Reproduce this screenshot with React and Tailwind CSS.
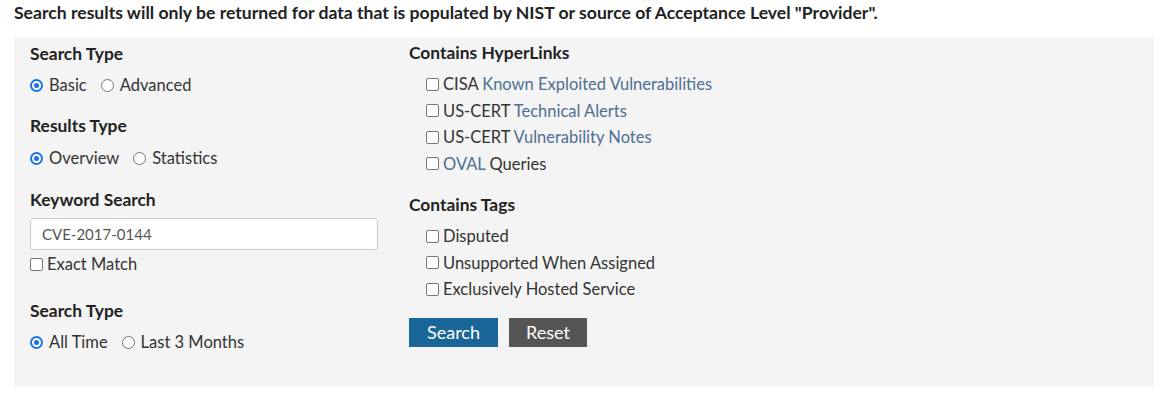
import React from "react";

function Radio({ checked, label }) {
  return (
    <label className="flex items-center mr-[14px]">
      <span
        className={
          "w-[13px] h-[13px] rounded-full border box-border mr-[6px] flex items-center justify-center bg-white " +
          (checked ? "border-[#1a73e8] border-[2px]" : "border-[#767676]")
        }
      >
        {checked ? <span className="block w-[5px] h-[5px] rounded-full bg-[#1a73e8]" /> : null}
      </span>
      <span>{label}</span>
    </label>
  );
}

function Box() {
  return <span className="inline-block w-[13px] h-[13px] border border-[#767676] rounded-[2px] bg-white mr-[4px] box-border shrink-0" />;
}

function Check({ children }) {
  return (
    <label className="flex items-center h-[26.5px]">
      <Box />
      <span>{children}</span>
    </label>
  );
}

function A({ children }) {
  return <span className="text-[#4e6f91]">{children}</span>;
}

export default function App() {
  return (
    <div className="bg-white text-[#333] text-[16.5px] leading-[20px] font-['Lato','Noto_Sans',sans-serif] w-[1165px] h-[400px]">
      <div className="pl-[14px] pt-[3px] h-[38px] font-bold text-[#222] text-[17.6px]">
        Search results will only be returned for data that is populated by NIST or source of Acceptance Level "Provider".
      </div>
      <div className="ml-[14px] w-[1140px] h-[348px] bg-[#f4f4f4] flex">
        <div className="w-[380px] pl-[16px]">
          <div className="font-bold text-[17.4px] h-[20px] mt-[6px] text-[#222]">Search Type</div>
          <div className="flex h-[20px] mt-[11px]">
            <Radio checked label="Basic" />
            <Radio label="Advanced" />
          </div>
          <div className="font-bold text-[17.4px] h-[20px] mt-[21px] text-[#222]">Results Type</div>
          <div className="flex h-[20px] mt-[12px]">
            <Radio checked label="Overview" />
            <Radio label="Statistics" />
          </div>
          <div className="font-bold text-[17.4px] h-[20px] mt-[22px] text-[#222]">Keyword Search</div>
          <div className="mt-[8px] w-[348px] h-[32px] bg-white border border-[#ccc] rounded-[3px] flex items-center pl-[11px] text-[15px] text-[#555]">
            CVE-2017-0144
          </div>
          <div className="h-[28px] flex items-center">
            <label className="flex items-center">
              <Box />
              <span>Exact Match</span>
            </label>
          </div>
          <div className="font-bold text-[17.4px] h-[20px] mt-[23px] text-[#222]">Search Type</div>
          <div className="flex h-[20px] mt-[11px]">
            <Radio checked label="All Time" />
            <Radio label="Last 3 Months" />
          </div>
        </div>
        <div className="flex-1 pl-[15px]">
          <div className="font-bold text-[17.4px] h-[20px] mt-[5px] text-[#222]">Contains HyperLinks</div>
          <div className="pl-[17px] mt-[8px]">
            <Check>CISA <A>Known Exploited Vulnerabilities</A></Check>
            <Check>US-CERT <A>Technical Alerts</A></Check>
            <Check>US-CERT <A>Vulnerability Notes</A></Check>
            <Check><A>OVAL</A> Queries</Check>
          </div>
          <div className="font-bold text-[17.4px] h-[20px] mt-[18px] text-[#222]">Contains Tags</div>
          <div className="pl-[17px] mt-[8px]">
            <Check>Disputed</Check>
            <Check>Unsupported When Assigned</Check>
            <Check>Exclusively Hosted Service</Check>
          </div>
          <div className="flex mt-[15px]">
            <div className="w-[89px] h-[29px] bg-[#1b6698] text-white text-[18px] flex items-center justify-center">Search</div>
            <div className="ml-[11px] w-[78px] h-[29px] bg-[#555] text-white text-[18px] flex items-center justify-center">Reset</div>
          </div>
        </div>
      </div>
    </div>
  );
}
